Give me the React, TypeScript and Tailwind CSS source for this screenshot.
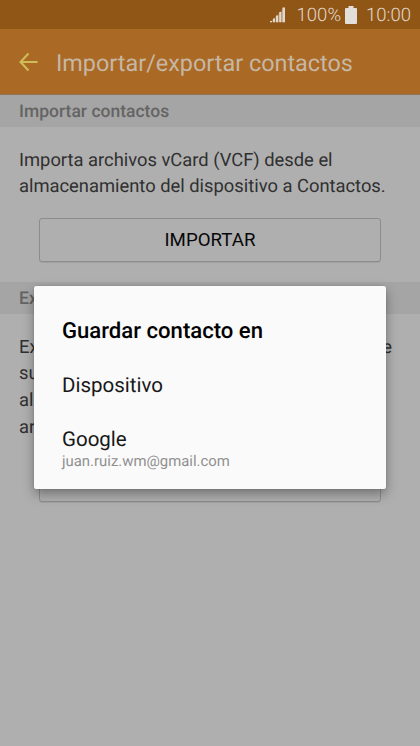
import React from 'react';

interface SectionProps {
  title: string;
  lines: string[][];
  action: string;
}

const SECTIONS: SectionProps[] = [
  {
    title: 'Importar contactos',
    lines: [['Importa archivos vCard (VCF) desde el'], ['almacenamiento del dispositivo a Contactos.']],
    action: 'IMPORTAR',
  },
  {
    title: 'Exportar',
    lines: [['Exp', 'de'], ['su'], ['al'], ['ar']],
    action: 'EXPORTAR',
  },
];

function StatusBar() {
  return (
    <div className="flex h-[29px] items-center justify-end bg-[#8f5616] pr-[9px] text-[18.5px] font-light text-[#e2d8cc]">
      <svg width="16" height="16" viewBox="0 0 16 16" fill="#e2d8cc" className="mt-px mr-[11px]">
        <path d="M0 15.200 15 0v15.200z" opacity="0.25" />
        <path d="M0 14h2v1.200H0zM3 11.500h2v3.700H3zM6 8.500h2.200v6.700H6zM9.200 5h2.200v10.200H9.200zM12.400 0.500H15v14.700h-2.600z" />
      </svg>
      <span className="pt-[2px]">100%</span>
      <svg width="12" height="18" viewBox="0 0 12 18" fill="#e2dfda" className="mr-[9px] ml-[4px]">
        <path d="M3.500 0h5v2H11a1 1 0 0 1 1 1v14a1 1 0 0 1-1 1H1a1 1 0 0 1-1-1V3a1 1 0 0 1 1-1h2.500z" />
      </svg>
      <span className="pt-[2px]">10:00</span>
    </div>
  );
}

function Section({ title, lines, action }: SectionProps) {
  return (
    <section>
      <h2 className="h-8 bg-[#a5a5a5] pl-[19px] text-[17.5px] leading-[34px] font-medium text-[#646464]">{title}</h2>
      <div className="pt-[20.600px] pr-[28px] pl-[19px] text-[18.350px] leading-[26.670px] whitespace-nowrap text-[#303030]">
        {lines.map((line) => (
          <p key={line[0]} className="flex justify-between">
            {line.map((part) => (
              <span key={part}>{part}</span>
            ))}
          </p>
        ))}
      </div>
      <button
        type="button"
        className="mx-[39px] mt-[17.060px] mb-5 block h-[44px] w-[342px] rounded-[3px] border border-[#8c8c8c] pt-px text-[18.700px] text-[#080808] shadow-[0_1px_0_#a2a2a2]"
      >
        {action}
      </button>
    </section>
  );
}

export default function App() {
  return (
    <div className="relative h-[746px] w-[420px] overflow-hidden bg-[#afafaf] font-['Roboto',sans-serif] [text-rendering:geometricPrecision]">
      <StatusBar />
      <header className="flex h-[66px] items-center border-b border-[#90765f] bg-[#aa6924] pl-[19px]">
        <svg width="19" height="20" viewBox="0 0 19 20" fill="none" stroke="#d0bd55" strokeWidth="2" className="mr-[18px]">
          <path d="M9.500 1.500 1.500 10l8 8.500M1.500 10H18.500" />
        </svg>
        <h1 className="pt-[4px] text-[23.400px] whitespace-nowrap text-[#c6b7a5]">Importar/exportar contactos</h1>
      </header>

      {SECTIONS.map((s) => (
        <Section key={s.title} {...s} />
      ))}

      {/* Dialog */}
      <div
        role="dialog"
        className="absolute top-[286px] left-[34px] h-[203px] w-[352px] rounded-[2px] bg-[#fafafa] pt-[31px] pl-7 whitespace-nowrap shadow-[0_5px_12px_rgba(0,0,0,0.35),0_0_2px_rgba(0,0,0,0.15)]"
      >
        <h3 className="text-[22.100px] leading-[28px] font-medium text-black">Guardar contacto en</h3>
        <p className="mt-[27px] text-[20.500px] leading-[28px] text-[#181818]">Dispositivo</p>
        <p className="mt-[26px] text-[20.500px] leading-[28px] text-[#181818]">Google</p>
        <p className="-mt-[3px] text-[14.900px] leading-[20px] text-[#909090]">juan.ruiz.wm@gmail.com</p>
      </div>
    </div>
  );
}
